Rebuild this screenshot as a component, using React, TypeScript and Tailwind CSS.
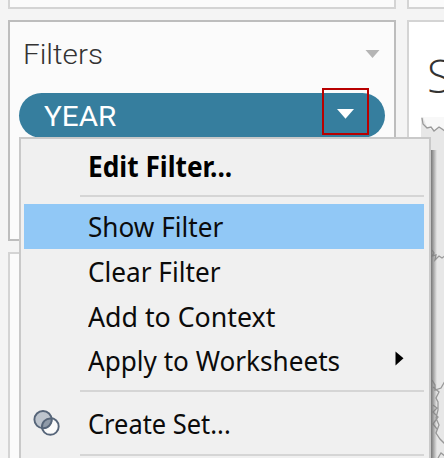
import React from "react";

const menuFont = "font-['Noto_Sans','Open_Sans',sans-serif]";
const shelfFont = "font-['Roboto','Inter',sans-serif]";

function Separator({ gap }: { gap: string }) {
  return <div className={`ml-[59px] mr-[5px] h-[2px] shrink-0 bg-[#d5d5d5] ${gap}`} />;
}

function Item({ label, fit, selected, icon, arrow }: {
  label: string;
  fit: string;
  selected?: boolean;
  icon?: React.ReactNode;
  arrow?: boolean;
}) {
  return (
    <div className={`ml-[3px] mr-[5px] flex h-[44.7px] shrink-0 items-center ${selected ? "bg-[#91c8f6]" : ""}`}>
      <div className="w-16 shrink-0 pl-[9px]">{icon}</div>
      <span className={`origin-left whitespace-pre ${fit}`}>{label}</span>
      {arrow && (
        <svg className="ml-auto mr-[20px] -mt-[3px] h-[15px] w-[9px] shrink-0" viewBox="0 0 9 15">
          <path d="M0.5 0.5 8.5 7.3 0.5 14.5Z" fill="#000" />
        </svg>
      )}
    </div>
  );
}

function SetIcon() {
  return (
    <svg className="-mt-px h-7 w-7" viewBox="0 0 28 28" fill="none" stroke="#566579" strokeWidth="1.9">
      <circle cx="17.3" cy="17.4" r="8.4" fill="#fafafa" />
      <circle cx="10" cy="10.6" r="8.6" fill="#bdc4cd" />
      <path d="M10 19.2A8.6 8.6 0 0 0 18.6 9.6 8.4 8.4 0 0 0 9 19.1Z" fill="#8f9aa8" />
    </svg>
  );
}

function ContextMenu() {
  return (
    <div className={`absolute left-[19px] top-[137px] flex h-[340px] w-[412px] flex-col border-2 border-[#c9c9c9] bg-[#f0f0f0] text-[28px] leading-[44px] text-[#0b0b0b] ${menuFont}`}>
      <div className="ml-[67px] mt-[5px] h-[51px] shrink-0 font-bold text-black">
        <span className="inline-block origin-left scale-x-[0.938] whitespace-pre">Edit Filter...</span>
      </div>
      <Separator gap="mb-[7px]" />
      <Item label="Show Filter" fit="scale-x-[0.935]" selected />
      <Item label="Clear Filter" fit="scale-x-[0.935]" />
      <Item label="Add to Context" fit="scale-x-[0.955]" />
      <Item label="Apply to Worksheets" fit="scale-x-[0.933]" arrow />
      <Separator gap="mt-[7px] mb-[9px]" />
      <Item label="Create Set..." fit="scale-x-[0.908]" icon={<SetIcon />} />
      <Separator gap="mt-[9px]" />
    </div>
  );
}

function MapSketch() {
  return (
    <svg className="ml-3 block h-[341px] w-[25px]" viewBox="0 0 25 341" fill="none" stroke="#999" strokeWidth="1.3">
      <path fill="#e7e7e7" stroke="none" d="M0 0H25V341H0Z" />
      <path fill="#f8f8f8" stroke="none" d="M2 0H25V13L19 10 13 14 6 10Z" />
      <path d="M1 1 2 7 6 11 10 10 13 14 18 10 21 12 25 15" />
      <path d="M11 133 13 136 11 139 15 138 14 143 18 139 21 141 25 138" />
      <path d="M11 263 14 268 14 273 20 271 24 264V254M12 270 18 275 15 281 17 285 17 293 15 301 18 308 15 316 19 322 25 328M12 288 16 291 12 295 17 300 12 307 16 312M17 341 20 336 25 340" />
    </svg>
  );
}

export default function App() {
  return (
    <div className={`relative flex h-[458px] w-[444px] gap-[11px] overflow-hidden bg-[#f4f4f4] pl-2 ${shelfFont}`}>
      <div className="flex w-[388px] shrink-0 flex-col gap-[11px]">
        <div className="h-[9px] shrink-0 border-x-2 border-b-2 border-[#d4d4d4] bg-[#fbfbfb]" />
        <section className="h-[221px] shrink-0 border-2 border-[#bdbdbd] bg-[#fbfbfb] px-[9px]">
          <div className="flex h-[71px] items-center justify-between pl-1 pr-[5px]">
            <h2 className="-mt-[6px] origin-left scale-x-[1.06] text-[28px] font-light leading-none text-[#333]">Filters</h2>
            <svg className="-mt-[7px] h-2 w-[15px]" viewBox="0 0 15 8">
              <path d="M0.5 0H14.5L7.5 8Z" fill="#b5b5b5" />
            </svg>
          </div>
          <div className="flex h-[45px] w-[366px] items-center justify-between rounded-full bg-[#367e9e] pl-[25px] text-[28px] text-white">
            <span className="mt-[3px] origin-left scale-x-[1.06]">YEAR</span>
            <div className="-mt-[9px] mr-4 flex h-[47px] w-[47px] items-center justify-center border-2 border-[#b80000]">
              <svg className="mt-[5px] h-[10px] w-[17px]" viewBox="0 0 17 10">
                <path d="M0 0H17L8.5 9.7Z" fill="#fff" />
              </svg>
            </div>
          </div>
        </section>
        <div className="min-h-0 flex-1 border-x-2 border-t-2 border-[#d4d4d4] bg-[#fbfbfb]" />
      </div>
      <div className="flex w-[40px] shrink-0 flex-col gap-[11px]">
        <div className="h-[9px] shrink-0 border-b-2 border-l-2 border-[#d4d4d4] bg-[#fbfbfb]" />
        <section className="min-h-0 flex-1 border-l-2 border-t-2 border-[#d4d4d4] bg-white">
          <div className="h-[95px] pl-[18px] pt-[28px] font-['Open_Sans',sans-serif] text-[46px] font-light leading-[50px] text-[#333]">S</div>
          <MapSketch />
        </section>
      </div>
      <div className="absolute left-[431px] top-[150px] h-[308px] w-[6px] bg-linear-to-r from-[#777] to-transparent" />
      <ContextMenu />
    </div>
  );
}
